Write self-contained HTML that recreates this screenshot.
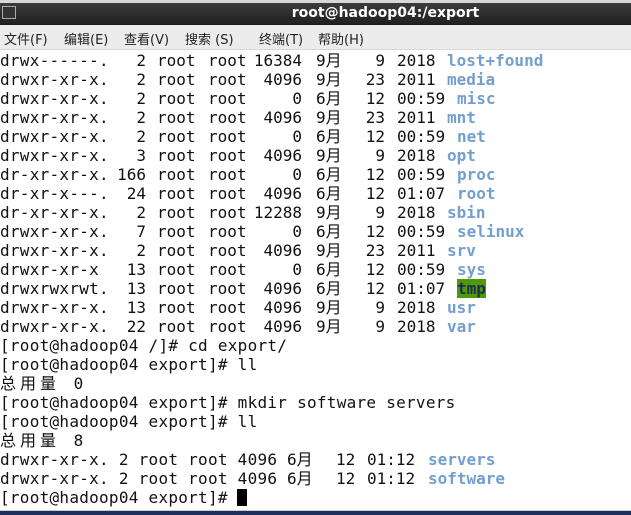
<html><head><style>
body{margin:0;width:631px;height:514px;overflow:hidden;background:#fff;position:relative;font-family:"DejaVu Sans Mono","Liberation Mono","Noto Sans CJK SC",monospace;}
.title{position:absolute;left:0;top:0;width:631px;height:25px;background:linear-gradient(#d8d8d8 0,#d8d8d8 3px,#3c3c3c 3px,#202020 24px,#111 25px);}
.title span{position:absolute;left:0;width:631px;top:5px;text-align:center;color:#fff;font:bold 14px "DejaVu Sans","Liberation Sans",sans-serif;padding-left:140px;box-sizing:border-box}
.ico{position:absolute;left:2px;top:6px;width:12px;height:11px;border:1px solid #aaa;background:#333}
.menu{position:absolute;top:25px;left:0;width:631px;height:24px;background:#ececec;border-bottom:1px solid #d8d8d8;font:13px "DejaVu Sans","Noto Sans CJK SC",sans-serif;color:#222}
.menu span{position:absolute;top:4px}
.r{position:absolute;left:0;height:19px;width:631px;font-size:16px;line-height:19px;color:#111;white-space:pre}
.r span{position:absolute;top:0}
.t{letter-spacing:0.27px}
.z{letter-spacing:4px}
.b{color:#729fcf;font-weight:bold}
.rt{text-align:right}
.cur{position:absolute;left:237px;top:489px;width:10px;height:17px;background:#000}
.bot{position:absolute;left:0;top:510px;width:631px;height:4px;background:#1c2e5c;border-top:1px solid #ccc}
</style></head><body>
<div class="title"><div class="ico"></div><span>root@hadoop04:/export</span></div>
<div class="menu"><span style="left:4px">文件(F)</span><span style="left:64px">编辑(E)</span><span style="left:124px">查看(V)</span><span style="left:185px">搜索 (S)</span><span style="left:259px">终端(T)</span><span style="left:318px">帮助(H)</span></div>

<div class="r" style="top:51px"><span class="t" style="left:0">drwx------.</span><span class="rt" style="left:110px;width:36px">2</span><span style="left:157px">root</span><span style="left:208px">root</span><span class="rt" style="left:240px;width:62px">16384</span><span style="left:316px">9月</span><span class="rt" style="left:355px;width:30px">9</span><span style="left:397px">2018</span><span class="b" style="left:447px">lost+found</span></div>
<div class="r" style="top:70px"><span class="t" style="left:0">drwxr-xr-x.</span><span class="rt" style="left:110px;width:36px">2</span><span style="left:157px">root</span><span style="left:208px">root</span><span class="rt" style="left:240px;width:62px">4096</span><span style="left:316px">9月</span><span class="rt" style="left:355px;width:30px">23</span><span style="left:397px">2011</span><span class="b" style="left:447px">media</span></div>
<div class="r" style="top:89px"><span class="t" style="left:0">drwxr-xr-x.</span><span class="rt" style="left:110px;width:36px">2</span><span style="left:157px">root</span><span style="left:208px">root</span><span class="rt" style="left:240px;width:62px">0</span><span style="left:316px">6月</span><span class="rt" style="left:355px;width:30px">12</span><span style="left:397px">00:59</span><span class="b" style="left:457px">misc</span></div>
<div class="r" style="top:108px"><span class="t" style="left:0">drwxr-xr-x.</span><span class="rt" style="left:110px;width:36px">2</span><span style="left:157px">root</span><span style="left:208px">root</span><span class="rt" style="left:240px;width:62px">4096</span><span style="left:316px">9月</span><span class="rt" style="left:355px;width:30px">23</span><span style="left:397px">2011</span><span class="b" style="left:447px">mnt</span></div>
<div class="r" style="top:127px"><span class="t" style="left:0">drwxr-xr-x.</span><span class="rt" style="left:110px;width:36px">2</span><span style="left:157px">root</span><span style="left:208px">root</span><span class="rt" style="left:240px;width:62px">0</span><span style="left:316px">6月</span><span class="rt" style="left:355px;width:30px">12</span><span style="left:397px">00:59</span><span class="b" style="left:457px">net</span></div>
<div class="r" style="top:146px"><span class="t" style="left:0">drwxr-xr-x.</span><span class="rt" style="left:110px;width:36px">3</span><span style="left:157px">root</span><span style="left:208px">root</span><span class="rt" style="left:240px;width:62px">4096</span><span style="left:316px">9月</span><span class="rt" style="left:355px;width:30px">9</span><span style="left:397px">2018</span><span class="b" style="left:447px">opt</span></div>
<div class="r" style="top:165px"><span class="t" style="left:0">dr-xr-xr-x.</span><span class="rt" style="left:110px;width:36px">166</span><span style="left:157px">root</span><span style="left:208px">root</span><span class="rt" style="left:240px;width:62px">0</span><span style="left:316px">6月</span><span class="rt" style="left:355px;width:30px">12</span><span style="left:397px">00:59</span><span class="b" style="left:457px">proc</span></div>
<div class="r" style="top:184px"><span class="t" style="left:0">dr-xr-x---.</span><span class="rt" style="left:110px;width:36px">24</span><span style="left:157px">root</span><span style="left:208px">root</span><span class="rt" style="left:240px;width:62px">4096</span><span style="left:316px">6月</span><span class="rt" style="left:355px;width:30px">12</span><span style="left:397px">01:07</span><span class="b" style="left:457px">root</span></div>
<div class="r" style="top:203px"><span class="t" style="left:0">dr-xr-xr-x.</span><span class="rt" style="left:110px;width:36px">2</span><span style="left:157px">root</span><span style="left:208px">root</span><span class="rt" style="left:240px;width:62px">12288</span><span style="left:316px">9月</span><span class="rt" style="left:355px;width:30px">9</span><span style="left:397px">2018</span><span class="b" style="left:447px">sbin</span></div>
<div class="r" style="top:222px"><span class="t" style="left:0">drwxr-xr-x.</span><span class="rt" style="left:110px;width:36px">7</span><span style="left:157px">root</span><span style="left:208px">root</span><span class="rt" style="left:240px;width:62px">0</span><span style="left:316px">6月</span><span class="rt" style="left:355px;width:30px">12</span><span style="left:397px">00:59</span><span class="b" style="left:457px">selinux</span></div>
<div class="r" style="top:241px"><span class="t" style="left:0">drwxr-xr-x.</span><span class="rt" style="left:110px;width:36px">2</span><span style="left:157px">root</span><span style="left:208px">root</span><span class="rt" style="left:240px;width:62px">4096</span><span style="left:316px">9月</span><span class="rt" style="left:355px;width:30px">23</span><span style="left:397px">2011</span><span class="b" style="left:447px">srv</span></div>
<div class="r" style="top:260px"><span class="t" style="left:0">drwxr-xr-x</span><span class="rt" style="left:110px;width:36px">13</span><span style="left:157px">root</span><span style="left:208px">root</span><span class="rt" style="left:240px;width:62px">0</span><span style="left:316px">6月</span><span class="rt" style="left:355px;width:30px">12</span><span style="left:397px">00:59</span><span class="b" style="left:457px">sys</span></div>
<div class="r" style="top:279px"><span class="t" style="left:0">drwxrwxrwt.</span><span class="rt" style="left:110px;width:36px">13</span><span style="left:157px">root</span><span style="left:208px">root</span><span class="rt" style="left:240px;width:62px">4096</span><span style="left:316px">6月</span><span class="rt" style="left:355px;width:30px">12</span><span style="left:397px">01:07</span><span style="left:457px;background:#4e9a06;color:#1e2d50;font-weight:bold;height:19px">tmp</span></div>
<div class="r" style="top:298px"><span class="t" style="left:0">drwxr-xr-x.</span><span class="rt" style="left:110px;width:36px">13</span><span style="left:157px">root</span><span style="left:208px">root</span><span class="rt" style="left:240px;width:62px">4096</span><span style="left:316px">9月</span><span class="rt" style="left:355px;width:30px">9</span><span style="left:397px">2018</span><span class="b" style="left:447px">usr</span></div>
<div class="r" style="top:317px"><span class="t" style="left:0">drwxr-xr-x.</span><span class="rt" style="left:110px;width:36px">22</span><span style="left:157px">root</span><span style="left:208px">root</span><span class="rt" style="left:240px;width:62px">4096</span><span style="left:316px">9月</span><span class="rt" style="left:355px;width:30px">9</span><span style="left:397px">2018</span><span class="b" style="left:447px">var</span></div>

<div class="r t" style="top:336px">[root@hadoop04 /]# cd export/</div>
<div class="r t" style="top:355px">[root@hadoop04 export]# ll</div>
<div class="r z" style="top:374px">总用量 0</div>
<div class="r t" style="top:393px">[root@hadoop04 export]# mkdir software servers</div>
<div class="r t" style="top:412px">[root@hadoop04 export]# ll</div>
<div class="r z" style="top:431px">总用量 8</div>
<div class="r" style="top:450px"><span class="t" style="left:0">drwxr-xr-x. 2 root root 4096</span><span style="left:287px">6月</span><span style="left:336px">12</span><span style="left:367px">01:12</span><span class="b" style="left:428px">servers</span></div>
<div class="r" style="top:469px"><span class="t" style="left:0">drwxr-xr-x. 2 root root 4096</span><span style="left:287px">6月</span><span style="left:336px">12</span><span style="left:367px">01:12</span><span class="b" style="left:428px">software</span></div>
<div class="r t" style="top:488px">[root@hadoop04 export]#</div>
<div class="cur"></div>
<div class="bot"></div>
</body></html>
